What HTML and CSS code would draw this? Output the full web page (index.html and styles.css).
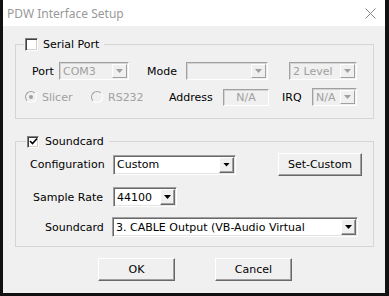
FILE: index.html
```html
<!DOCTYPE html>
<html lang="en">
<head>
	<meta charset="UTF-8">
	<title>PDW Interface Setup</title>
	<link rel="stylesheet" href="styles.css">
</head>
<body>
	<div class="window">
		<div class="titlebar">
			<span class="title">PDW Interface Setup</span>
			<svg class="close" width="11" height="11" viewBox="0 0 11 11">
				<path d="M0.5 0.5 L10.5 10.5 M10.5 0.5 L0.5 10.5" stroke="#8a8a8a" stroke-width="1" fill="none"/>
			</svg>
		</div>
		<div class="content">
			<!-- serial port group -->
			<fieldset class="group group-serial">
				<legend><span class="check"></span>Serial Port</legend>
				<div class="row row-port">
					<span class="label lbl-port">Port</span>
					<div class="combo disabled w-com"><span class="val">COM3</span><span class="drop"></span></div>
					<span class="label lbl-mode">Mode</span>
					<div class="combo disabled w-mode"><span class="val"></span><span class="drop"></span></div>
					<div class="combo disabled w-level"><span class="val">2 Level</span><span class="drop"></span></div>
				</div>
				<div class="row row-opts">
					<span class="radio-item ri-slicer"><span class="radio on"></span>Slicer</span>
					<span class="radio-item ri-rs232"><span class="radio"></span>RS232</span>
					<span class="label lbl-addr">Address</span>
					<div class="edit disabled w-addr">N/A</div>
					<span class="label lbl-irq">IRQ</span>
					<div class="combo disabled w-irq"><span class="val">N/A</span><span class="drop"></span></div>
				</div>
			</fieldset>

			<!-- soundcard group -->
			<fieldset class="group group-sound">
				<legend><span class="check checked"><svg width="9" height="9" viewBox="0 0 9 9"><path d="M1 4 L3.5 6.5 L8 1.5" stroke="#000" stroke-width="1.6" fill="none"/></svg></span>Soundcard</legend>
				<div class="row row-config">
					<span class="label lbl-config">Configuration</span>
					<div class="combo w-config"><span class="val">Custom</span><span class="drop"></span></div>
					<button class="btn btn-setcustom">Set-Custom</button>
				</div>
				<div class="row row-rate">
					<span class="label lbl-rate">Sample Rate</span>
					<div class="combo w-rate"><span class="val">44100</span><span class="drop"></span></div>
				</div>
				<div class="row row-card">
					<span class="label lbl-card">Soundcard</span>
					<div class="combo w-card"><span class="val">3. CABLE Output (VB-Audio Virtual</span><span class="drop"></span></div>
				</div>
			</fieldset>

			<div class="buttons">
				<button class="btn btn-dlg">OK</button>
				<button class="btn btn-dlg">Cancel</button>
			</div>
		</div>
	</div>
</body>
</html>
```

FILE: styles.css
```css
*{
	margin: 0;
	padding: 0;
	box-sizing: border-box;
}
body{
	background-color: #111;
	font-family: "DejaVu Sans", sans-serif;
	font-size: 11px;
	color: #000;
}
.window{
	width: 382px;
	height: 293px;
	margin-left: 3px;
	background-color: #f0f0f0;
	display: flex;
	flex-direction: column;
}
.titlebar{
	height: 26px;
	background-color: #fff;
	display: flex;
	align-items: center;
	padding-left: 4px;
}
.titlebar .title{
	font-family: "Noto Sans", sans-serif;
	font-size: 12px;
	color: #999;
	flex: 1;
}
.titlebar .close{
	margin-right: 9px;
	margin-top: 1px;
}
.content{
	padding-left: 12px;
	display: flex;
	flex-direction: column;
}
.group{
	width: 359px;
	border: 1px solid #d5d5d5;
}
.group legend{
	display: flex;
	align-items: center;
	height: 13px;
	margin-left: 8px;
	padding: 0 5px 0 1px;
}
.group-serial{
	margin-top: 12px;
	padding-bottom: 12px;
}
.group-sound{
	margin-top: 16px;
	padding-bottom: 9px;
}
.group-sound legend{
	margin-left: 10px;
}
.check{
	width: 13px;
	height: 13px;
	background-color: #fff;
	border: 1px solid;
	border-color: #808080 #fff #fff #808080;
	box-shadow: inset 1px 1px 0 #404040, inset -1px -1px 0 #d4d0c8;
	margin-right: 5px;
	display: flex;
	align-items: center;
	justify-content: center;
}
.group-sound .check{
	width: 12px;
	height: 12px;
	margin-right: 6px;
}
.row{
	display: flex;
	align-items: center;
}
.label{
	white-space: nowrap;
}
/* serial rows */
.row-port{
	margin-top: 11px;
	height: 18px;
}
.lbl-port{
	margin-left: 16px;
	width: 27px;
}
.w-com{
	width: 70px;
}
.lbl-mode{
	margin-left: 18px;
	width: 39px;
}
.w-mode{
	width: 82px;
}
.w-level{
	margin-left: 21px;
	width: 68px;
}
.row-opts{
	margin-top: 8px;
	height: 18px;
}
.radio-item{
	display: flex;
	align-items: center;
	color: #a0a0a0;
	white-space: nowrap;
}
.ri-slicer{
	margin-left: 9px;
	width: 66px;
}
.ri-rs232{
	width: 78px;
}
.radio{
	width: 12px;
	height: 12px;
	border-radius: 50%;
	border: 1px solid;
	border-color: #a0a0a0 #fff #fff #a0a0a0;
	background-color: #f0f0f0;
	margin-right: 5px;
	position: relative;
}
.radio.on::after{
	content: "";
	position: absolute;
	left: 3px;
	top: 3px;
	width: 4px;
	height: 4px;
	border-radius: 50%;
	background-color: #a0a0a0;
}
.lbl-addr{
	width: 54px;
}
.edit{
	height: 17px;
	border: 1px solid;
	border-color: #a0a0a0 #fff #fff #a0a0a0;
	box-shadow: inset 1px 1px 0 #d4d4d4;
	color: #a0a0a0;
	display: flex;
	align-items: center;
	justify-content: center;
}
.w-addr{
	width: 46px;
}
.lbl-irq{
	margin-left: 13px;
	width: 30px;
}
.w-irq{
	width: 45px;
}
/* combo boxes */
.combo{
	height: 20px;
	display: flex;
	background-color: #fff;
	border: 1px solid;
	border-color: #a0a0a0 #fff #fff #a0a0a0;
	box-shadow: inset 1px 1px 0 #696969, inset -1px -1px 0 #e3e3e3;
	padding: 1px;
}
.combo .val{
	flex: 1;
	padding-left: 2px;
	display: flex;
	align-items: center;
	white-space: nowrap;
	overflow: hidden;
}
.combo .drop{
	width: 15px;
	background-color: #f0f0f0;
	border: 1px solid;
	border-color: #fff #696969 #696969 #fff;
	box-shadow: inset -1px -1px 0 #a0a0a0;
	display: flex;
	align-items: center;
	justify-content: center;
}
.combo .drop::after{
	content: "";
	width: 7px;
	height: 4px;
	background-color: #000;
	clip-path: polygon(0 0, 100% 0, 50% 100%);
}
.combo.disabled{
	height: 18px;
	background-color: #f0f0f0;
	color: #a0a0a0;
	box-shadow: inset 1px 1px 0 #d4d4d4;
}
.combo.disabled .drop{
	border-color: #fff #a0a0a0 #a0a0a0 #fff;
	box-shadow: none;
}
.combo.disabled .drop::after{
	background-color: #a0a0a0;
}
/* soundcard rows */
.row-config{
	margin-top: 5px;
	height: 23px;
}
.lbl-config{
	margin-left: 14px;
	width: 83px;
}
.w-config{
	width: 123px;
}
.row-rate{
	margin-top: 11px;
	height: 20px;
}
.lbl-rate{
	margin-left: 17px;
	width: 80px;
}
.w-rate{
	width: 64px;
}
.row-card{
	margin-top: 10px;
	height: 20px;
}
.lbl-card{
	margin-left: 29px;
	width: 67px;
}
.w-card{
	width: 246px;
}
/* buttons */
.btn{
	font-family: "DejaVu Sans", sans-serif;
	font-size: 11px;
	color: #000;
	height: 23px;
	background-color: #f0f0f0;
	border: 1px solid;
	border-color: #fff #696969 #696969 #fff;
	box-shadow: inset -1px -1px 0 #a0a0a0;
}
.btn-setcustom{
	margin-left: 42px;
	width: 84px;
}
.buttons{
	display: flex;
	margin-top: 11px;
	padding-left: 83px;
	gap: 40px;
}
.btn-dlg{
	width: 77px;
}
```
